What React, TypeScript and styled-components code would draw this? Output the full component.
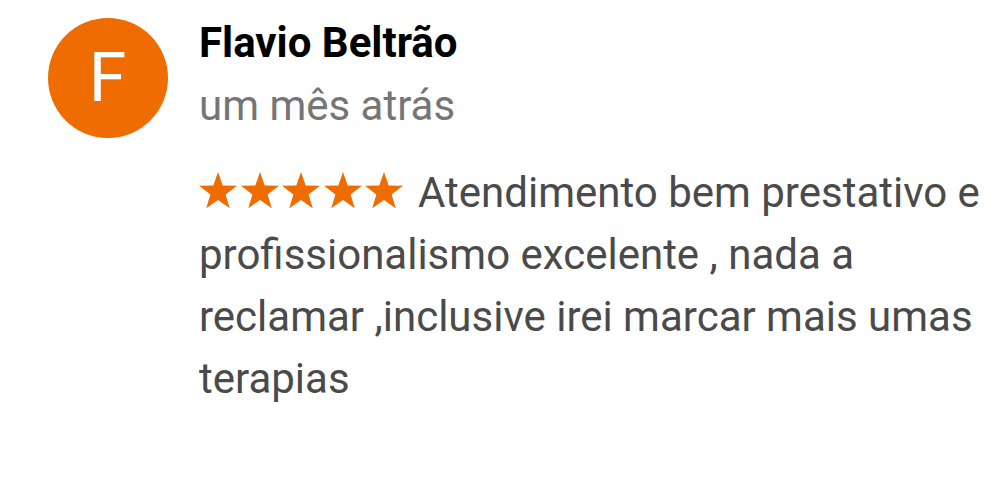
import React from "react";
import styled, { createGlobalStyle } from "styled-components";

const Global = createGlobalStyle`
  html, body { margin: 0; padding: 0; background: #ffffff; }
  body { font-family: Roboto, "Noto Sans", Arial, sans-serif; -webkit-font-smoothing: antialiased; }
`;

const Review = styled.div`
  display: flex;
  align-items: flex-start;
  padding: 18px 6px 0 48px;
  gap: 31px;
`;

const Avatar = styled.div`
  flex: 0 0 120px;
  width: 120px;
  height: 120px;
  border-radius: 50%;
  background: #ef6c00;
  display: flex;
  align-items: center;
  justify-content: center;
`;

const Initial = styled.span`
  color: #ffffff;
  font-size: 68px;
  font-weight: 400;
  line-height: 1;
  filter: blur(0.6px);
  margin-left: -1px;
`;

const Content = styled.div`
  flex: 1;
  display: flex;
  flex-direction: column;
`;

const Name = styled.div`
  font-size: 42px;
  font-weight: 700;
  line-height: 50px;
  color: #000000;
`;

const Time = styled.div`
  margin-top: 13px;
  font-size: 42px;
  line-height: 50px;
  color: #757575;
`;

const Body = styled.p`
  margin: 31px 0 0 0;
  font-size: 42px;
  line-height: 62px;
  color: #4a4a4a;
`;

const Stars = styled.span`
  display: inline-flex;
  gap: 3.5px;
  margin-right: 15px;
  vertical-align: -3px;
`;

const StarIcon = styled.svg`
  width: 38px;
  height: 38px;
  display: block;
`;

function starPoints(cx: number, cy: number, R: number, r: number) {
  const pts: string[] = [];
  for (let i = 0; i < 10; i++) {
    const rad = i % 2 === 0 ? R : r;
    const a = (Math.PI / 5) * i - Math.PI / 2;
    pts.push(`${(cx + rad * Math.cos(a)).toFixed(2)},${(cy + rad * Math.sin(a)).toFixed(2)}`);
  }
  return pts.join(" ");
}

const Star = () => (
  <StarIcon viewBox="0 0 38 38">
    <polygon points={starPoints(19, 20, 20, 8)} fill="#ef6c00" />
  </StarIcon>
);

export default function App() {
  return (
    <>
      <Global />
      <Review>
        <Avatar>
          <Initial>F</Initial>
        </Avatar>
        <Content>
          <Name>Flavio Beltrão</Name>
          <Time>um mês atrás</Time>
          <Body>
            <Stars>
              {[0, 1, 2, 3, 4].map((i) => (
                <Star key={i} />
              ))}
            </Stars>
            Atendimento bem prestativo e profissionalismo excelente , nada a reclamar ,inclusive irei marcar mais umas terapias
          </Body>
        </Content>
      </Review>
    </>
  );
}
